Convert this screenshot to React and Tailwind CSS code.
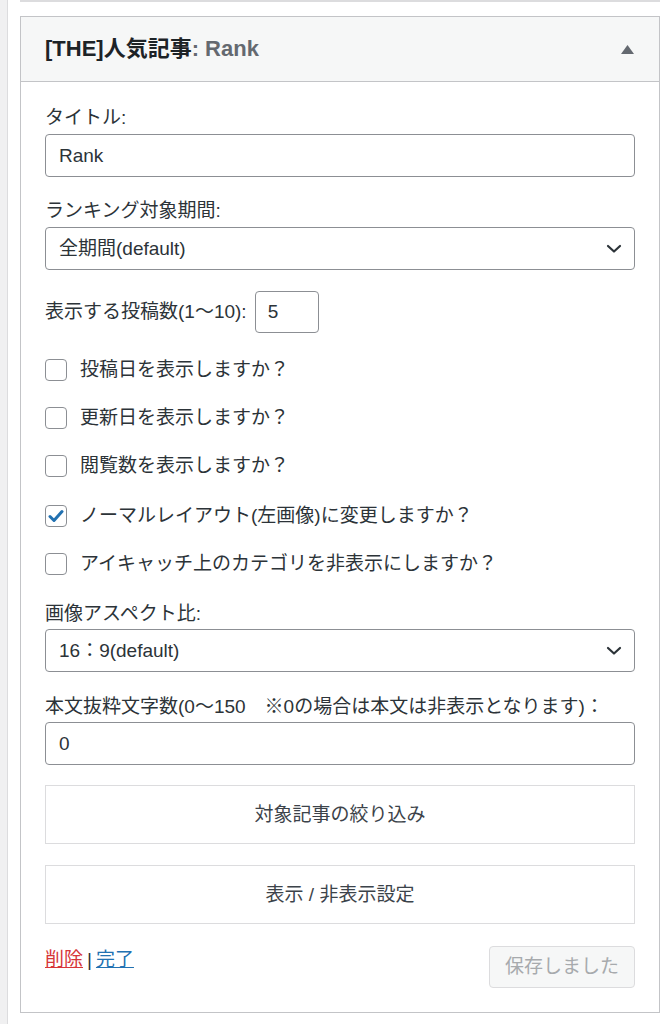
import { useState } from 'react';

const font = { fontFamily: '"Liberation Sans", "Noto Sans CJK JP", sans-serif' };

function Chevron() {
  return (
    <svg width="16" height="10" viewBox="0 0 16 10" className="absolute right-[13px] top-1/2 -translate-y-1/2 pointer-events-none">
      <path d="M2 2 L8 7.5 L14 2" fill="none" stroke="#2c3338" strokeWidth="2.2" strokeLinecap="round" strokeLinejoin="round" />
    </svg>
  );
}

function Checkbox({ label, checked, onChange, className }) {
  return (
    <label className={`flex items-center h-[26px] ${className}`}>
      <span
        onClick={onChange}
        className="w-[22px] h-[22px] rounded-[4px] border border-[#8c8f94] bg-white flex items-center justify-center shrink-0"
      >
        {checked && (
          <svg width="16" height="14" viewBox="0 0 16 14">
            <path d="M2 7.5 L6 11.5 L14 2.5" fill="none" stroke="#2271b1" strokeWidth="3" strokeLinecap="round" strokeLinejoin="round" />
          </svg>
        )}
      </span>
      <span className="ml-[13px]">{label}</span>
    </label>
  );
}

export default function App() {
  const [checks, setChecks] = useState([false, false, false, true, false]);
  const toggle = (i) => setChecks(checks.map((c, j) => (j === i ? !c : c)));

  const boxes = [
    { label: '投稿日を表示しますか？', mt: 'mt-[24px]' },
    { label: '更新日を表示しますか？', mt: 'mt-[22px]' },
    { label: '閲覧数を表示しますか？', mt: 'mt-[22px]' },
    { label: 'ノーマルレイアウト(左画像)に変更しますか？', mt: 'mt-[24px]' },
    { label: 'アイキャッチ上のカテゴリを非表示にしますか？', mt: 'mt-[22px]' },
  ];

  return (
    <div className="w-[670px] h-[1024px] bg-white flex overflow-hidden text-[19px] text-[#2c3338]" style={font}>
      {/* left strip */}
      <div className="w-[8px] bg-[#f0f0f1] border-r border-[#dcdcde] shrink-0"></div>

      <div className="pl-[12px] w-[652px]">
        {/* previous widget bottom edge */}
        <div className="h-[2px] border-b-2 border-[#dcdcde]"></div>

        <div className="mt-[14px] border border-[#c3c4c7] bg-white">
          {/* header */}
          <div className="h-[65px] bg-[#f6f7f7] border-b border-[#c3c4c7] flex items-center justify-between pl-[24px] pr-[25px]">
            <h3 className="font-semibold text-[22px] text-[#1d2327] leading-none">
              [THE]人気記事<span className="text-[#646970]">: Rank</span>
            </h3>
            <svg width="13" height="9" viewBox="0 0 13 9">
              <path d="M6.5 0 L13 9 L0 9 Z" fill="#646970" />
            </svg>
          </div>

          {/* body */}
          <div className="px-[24px] pt-[24px] pb-[24px] leading-[24px]">
            <p className="mb-[4px]">タイトル:</p>
            <input
              defaultValue="Rank"
              className="w-full h-[43px] border border-[#8c8f94] rounded-[4px] px-[13px] outline-none"
            />

            <p className="mt-[22px] mb-[4px]">ランキング対象期間:</p>
            <div className="relative">
              <select className="w-full h-[43px] border border-[#8c8f94] rounded-[4px] px-[13px] appearance-none bg-white outline-none">
                <option>全期間(default)</option>
              </select>
              <Chevron />
            </div>

            <div className="mt-[21px] flex items-center">
              <span>表示する投稿数(1〜10):</span>
              <input
                defaultValue="5"
                className="ml-[8px] w-[64px] h-[42px] border border-[#8c8f94] rounded-[4px] px-[12px] outline-none"
              />
            </div>

            {boxes.map((b, i) => (
              <Checkbox key={b.label} label={b.label} checked={checks[i]} onChange={() => toggle(i)} className={b.mt} />
            ))}

            <p className="mt-[25px] mb-[3px]">画像アスペクト比:</p>
            <div className="relative">
              <select className="w-full h-[43px] border border-[#8c8f94] rounded-[4px] px-[13px] appearance-none bg-white outline-none">
                <option>16：9(default)</option>
              </select>
              <Chevron />
            </div>

            <p className="mt-[23px] mb-[3px]">本文抜粋文字数(0〜150　※0の場合は本文は非表示となります)：</p>
            <input
              defaultValue="0"
              className="w-full h-[43px] border border-[#8c8f94] rounded-[4px] px-[13px] outline-none"
            />

            <button className="mt-[20px] w-full h-[59px] border border-[#dcdcde] bg-white text-[#3c434a]">
              対象記事の絞り込み
            </button>
            <button className="mt-[21px] w-full h-[59px] border border-[#dcdcde] bg-white text-[#3c434a]">
              表示 / 非表示設定
            </button>

            <div className="mt-[22px] flex justify-between items-start">
              <div className="mt-[2px]">
                <a href="#" className="text-[#d63638] underline">削除</a>
                <span className="mx-[4px] text-[#2c3338]">|</span>
                <a href="#" className="text-[#2271b1] underline">完了</a>
              </div>
              <button disabled className="w-[146px] h-[42px] rounded-[4px] border border-[#dcdcde] bg-[#f6f7f7] text-[#a7aaad]">
                保存しました
              </button>
            </div>
          </div>
        </div>
      </div>
    </div>
  );
}
